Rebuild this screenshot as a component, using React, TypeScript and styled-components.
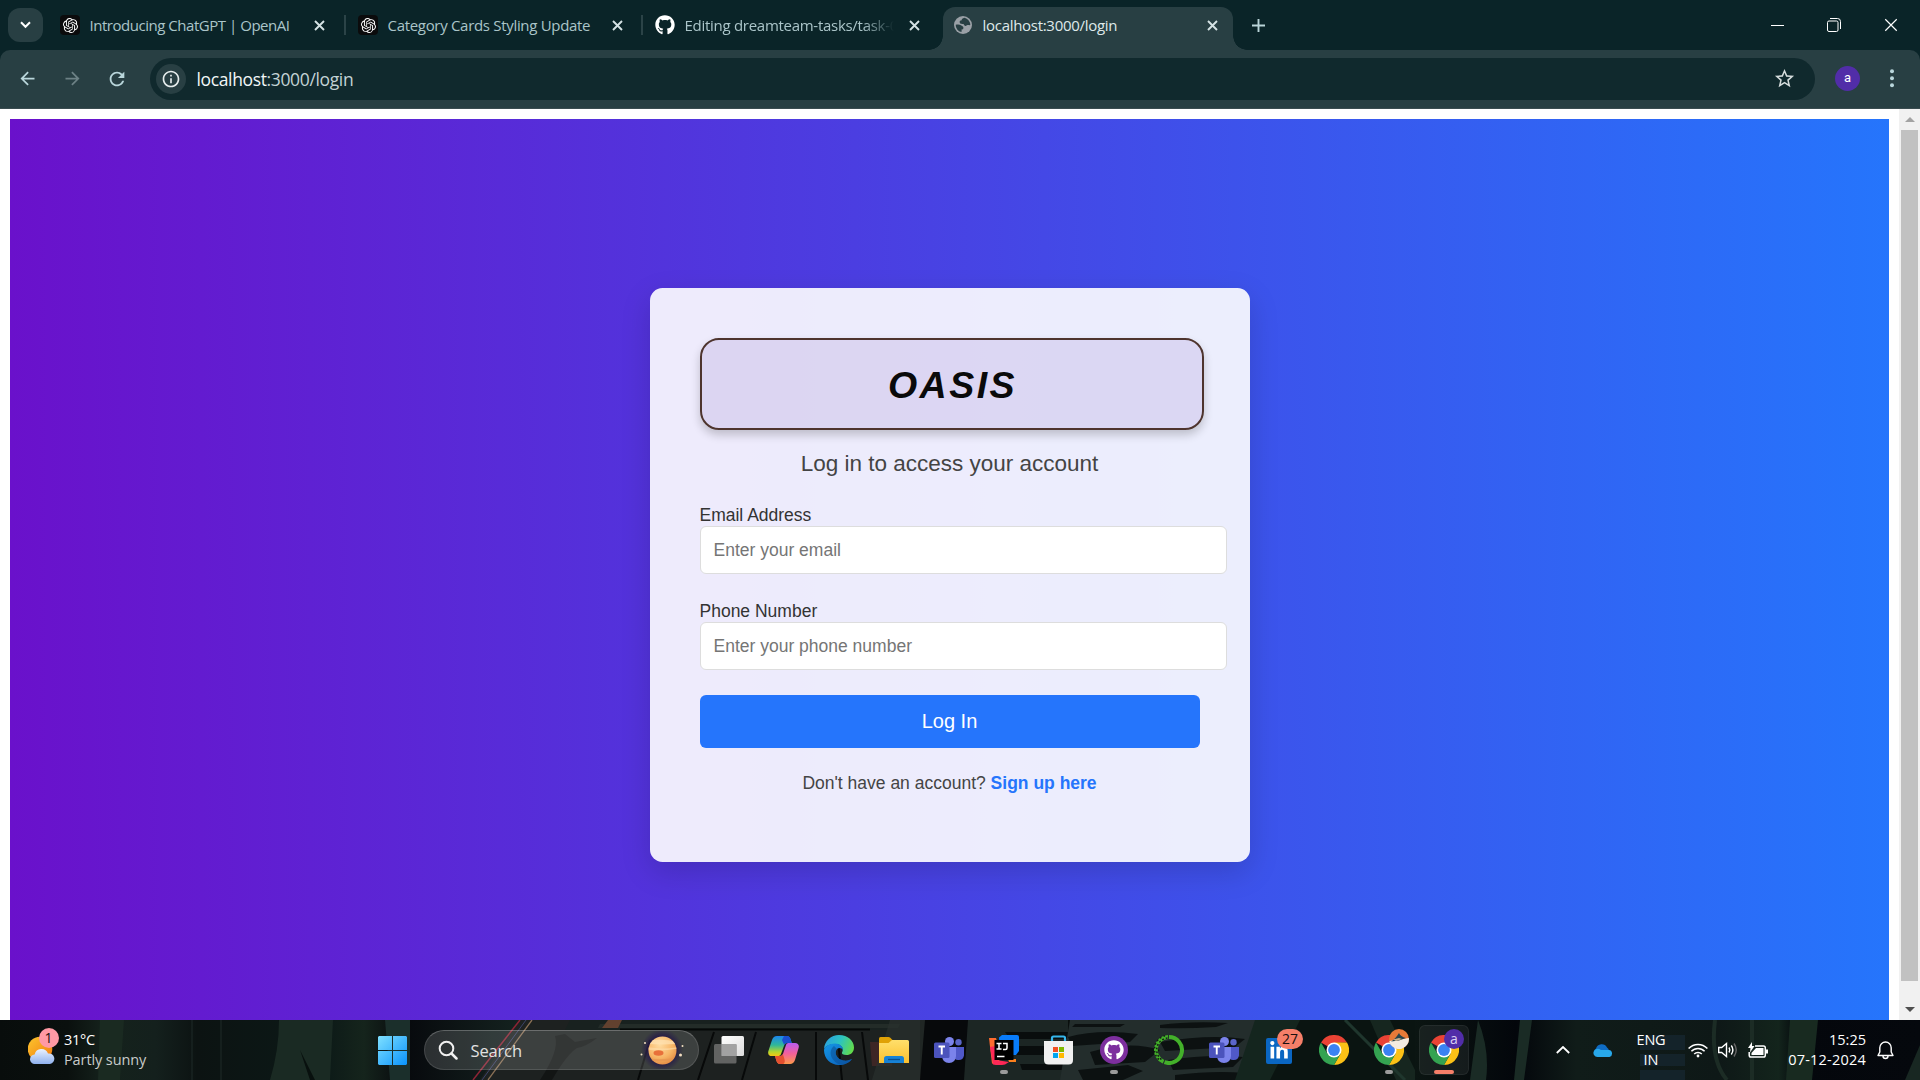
import React from "react";
import styled, { createGlobalStyle } from "styled-components";
import { SiOpenai } from "react-icons/si";
import { FaGithub, FaLinkedinIn } from "react-icons/fa";
import { MdArrowBack, MdArrowForward, MdRefresh, MdInfoOutline, MdStarOutline } from "react-icons/md";

const GlobalStyle = createGlobalStyle`
  html, body { margin: 0; padding: 0; overflow: hidden; background: #fff; }
  * { box-sizing: border-box; }
`;

const ui = `"Open Sans", "Noto Sans", sans-serif`;
const arial = `"Liberation Sans", Arial, sans-serif`;

const Screen = styled.div`
  width: 1920px;
  height: 1080px;
  display: flex;
  flex-direction: column;
  overflow: hidden;
  font-family: ${ui};
`;

const Label = styled.span<{ $spacing?: number }>`
  white-space: nowrap;
  letter-spacing: ${(p) => p.$spacing ?? 0}px;
`;

/* ---------- Browser chrome ---------- */

const TabStrip = styled.header`
  height: 50px;
  flex: none;
  display: flex;
  background: #0a2428;
  color: #b4cdd1;
`;

const TabSearch = styled.button`
  width: 35px;
  height: 34px;
  margin: 8px 7px 0 8px;
  border: 0;
  padding: 0;
  border-radius: 12px;
  background: #283f43;
  color: #fff;
  display: grid;
  place-items: center;
`;

const Tab = styled.div<{ $active?: boolean; $width: number }>`
  position: relative;
  width: ${(p) => p.$width}px;
  height: 43px;
  margin-top: 7px;
  padding: 0 0 0 10px;
  display: flex;
  flex: none;
  align-items: flex-start;
  border-radius: 12px 12px 0 0;
  font-size: 15px;
  line-height: 22px;
  background: ${(p) => (p.$active ? "#283f43" : "transparent")};
  color: ${(p) => (p.$active ? "#dfe9ea" : "#abc5c9")};
  ${(p) =>
    p.$active &&
    `&::before, &::after {
      content: "";
      position: absolute;
      bottom: 0;
      width: 14px;
      height: 14px;
    }
    &::before { left: -14px; background: radial-gradient(circle at 0 0, transparent 13.5px, #283f43 14px); }
    &::after { right: -14px; background: radial-gradient(circle at 100% 0, transparent 13.5px, #283f43 14px); }`}
`;

const Favicon = styled.span<{ $dark?: boolean }>`
  width: 20px;
  height: 20px;
  margin-top: 8px;
  flex: none;
  display: grid;
  place-items: center;
  border-radius: 4px;
  background: ${(p) => (p.$dark ? "#0b0b0c" : "transparent")};
  color: #fff;
`;

const TabTitle = styled.span<{ $fade?: boolean; $spacing: number }>`
  width: 214px;
  flex: none;
  margin: 7px 0 0 9.5px;
  white-space: nowrap;
  letter-spacing: ${(p) => p.$spacing}px;
  ${(p) => p.$fade && `mask-image: linear-gradient(to right, #000 178px, transparent 209px);`}
`;

const TabClose = styled.span`
  width: 20px;
  height: 20px;
  margin: 8px 0 0 6px;
  display: grid;
  place-items: center;
  color: #d5e2e4;
`;

const Divider = styled.i`
  width: 2px;
  height: 20px;
  margin: 15px 2px 0 -4px;
  background: #2b4347;
`;

const NewTab = styled.span`
  width: 50px;
  height: 50px;
  display: grid;
  place-items: center;
  color: #b9d4d8;
`;

const WindowControls = styled.div`
  margin-left: auto;
  display: flex;
  color: #fff;
`;

const ControlCell = styled.span`
  width: 57px;
  height: 50px;
  display: grid;
  place-items: center;
  & + & { padding-right: 1.5px; }
`;

const ToolbarBack = styled.div`
  flex: none;
  height: 59px;
  background: #0a2428;
`;

const Toolbar = styled.div`
  height: 59px;
  display: flex;
  align-items: center;
  padding-bottom: 1px;
  border-bottom: 1px solid #3a4c50;
  border-radius: 10px 10px 0 0;
  background: #283f43;
  color: #b9d2d6;
`;

const NavButton = styled.span<{ $dim?: boolean }>`
  width: 45px;
  height: 42px;
  display: grid;
  place-items: center;
  color: ${(p) => (p.$dim ? "#6c8185" : "#b9d6db")};
`;

const NavGroup = styled.div`
  display: flex;
  flex: none;
  width: 150px;
  padding-left: 4.5px;
`;

const AddressBar = styled.div`
  width: 1665px;
  flex: none;
  height: 42px;
  border-radius: 21px;
  background: #10292d;
  display: flex;
  align-items: center;
  padding: 0 19px 0 6px;
`;

const SiteInfo = styled.span`
  width: 30px;
  height: 30px;
  border-radius: 50%;
  background: #283f43;
  color: #e6eded;
  display: grid;
  place-items: center;
`;

const Url = styled.span`
  margin-left: 10.5px;
  font-size: 17.5px;
  line-height: 26px;
  letter-spacing: -0.36px;
  color: #c3d3d5;
  flex: 1;
  b { font-weight: 400; color: #f2f7f7; }
`;

const Profile = styled.span`
  width: 25px;
  height: 25px;
  flex: none;
  margin: 0 0 1px 20px;
  border-radius: 50%;
  background: #512da8;
  color: #fff;
  font: 13px/24px Roboto, sans-serif;
  text-align: center;
`;

const MenuDots = styled.span`
  width: 60px;
  flex: none;
  padding-left: 4px;
  display: grid;
  place-items: center;
`;

/* ---------- Page ---------- */

const Viewport = styled.div`
  height: 911px;
  flex: none;
  display: flex;
  background: #fff;
  overflow: hidden;
`;

const PageBody = styled.main`
  flex: 1;
  padding: 10px 10px 0 10px;
`;

const Gradient = styled.div`
  height: 912px;
  padding-top: 169px;
  background: linear-gradient(to right, #6a11cb, #2575fc);
  font-family: ${arial};
`;

const Card = styled.section`
  width: 600px;
  height: 574px;
  margin: 0 auto;
  padding: 50px;
  border-radius: 12.5px;
  background: rgba(255, 255, 255, 0.9);
  box-shadow: 0 10px 30px rgba(0, 0, 0, 0.15);
`;

const Brand = styled.h1`
  width: 504px;
  height: 92px;
  margin: 0;
  padding: 0.5px 0 0 2px;
  border: 2px solid #4e342e;
  border-radius: 19px;
  background: rgba(80, 40, 160, 0.11);
  box-shadow: 0 5px 10px rgba(0, 0, 0, 0.2);
  color: #0a0a0a;
  font: italic 700 37.5px/89px ${arial};
  letter-spacing: 2.5px;
  text-align: center;
`;

const Subtitle = styled.p`
  margin: 21px 0 28px;
  font-size: 22.5px;
  line-height: 26px;
  text-align: center;
  color: #444;
`;

const Field = styled.div`
  height: 69px;
  margin-bottom: 27px;
`;

const FieldLabel = styled.label`
  display: block;
  height: 21px;
  font-size: 17.5px;
  line-height: 20px;
  color: #333;
`;

const Input = styled.input`
  display: block;
  width: 527px;
  height: 48px;
  padding: 0 13px;
  border: 1px solid #ddd;
  border-radius: 6px;
  background: #fff;
  font: 17.5px ${arial};
  &::placeholder { color: #757575; opacity: 1; }
`;

const Submit = styled.button`
  display: block;
  width: 500px;
  height: 53px;
  margin: -2px 0 25px;
  padding: 0;
  border: 0;
  border-radius: 6px;
  background: #2575fc;
  color: #fff;
  font: 20px ${arial};
`;

const Footer = styled.p`
  margin: 0;
  font-size: 17.5px;
  line-height: 20px;
  text-align: center;
  color: #444;
  a { color: #2575fc; font-weight: 700; text-decoration: none; }
`;

const Scrollbar = styled.div`
  width: 21px;
  display: flex;
  flex-direction: column;
  align-items: center;
  background: #f1f1f1;
`;

const ScrollArrow = styled.span<{ $down?: boolean }>`
  height: 21px;
  width: 21px;
  display: grid;
  place-items: center;
  margin-top: ${(p) => (p.$down ? "18px" : 0)};
`;

const Thumb = styled.span`
  width: 17px;
  height: 851px;
  background: #c1c1c1;
`;

/* ---------- Taskbar ---------- */

const Taskbar = styled.footer`
  position: relative;
  height: 60px;
  flex: none;
  display: flex;
  background: #0a0f0e;
  color: #fff;
  overflow: hidden;
`;

const Wallpaper = styled.svg`
  position: absolute;
  inset: 0;
  width: 1920px;
  height: 60px;
`;

const Weather = styled.div`
  position: relative;
  width: 378px;
  display: flex;
  padding: 8px 0 0 28px;
`;

const TwoLines = styled.div<{ $align?: string; $width?: number }>`
  display: flex;
  flex-direction: column;
  width: ${(p) => (p.$width ? `${p.$width}px` : "auto")};
  text-align: ${(p) => p.$align ?? "left"};
  font-size: 14.5px;
  line-height: 20px;
`;

const WeatherText = styled(TwoLines)`
  margin: 2px 0 0 5px;
  span + span { color: #c9cccb; }
`;

const Start = styled.span`
  position: relative;
  width: 46px;
  padding-top: 16px;
`;

const Search = styled.div`
  position: relative;
  width: 275px;
  height: 40px;
  margin-top: 10px;
  border-radius: 20px;
  border: 1px solid rgba(255, 255, 255, 0.12);
  border-top-color: rgba(255, 255, 255, 0.24);
  background: rgba(255, 255, 255, 0.14);
  display: flex;
  align-items: center;
  padding: 0 14px 0 13px;
  font-size: 16.5px;
  color: #e2e2e0;
`;

const SearchText = styled.span`
  flex: 1;
  margin-left: 12.5px;
  letter-spacing: -0.15px;
`;

const Apps = styled.div`
  position: relative;
  display: flex;
  padding-left: 2px;
`;

const AppSlot = styled.span<{ $active?: boolean }>`
  position: relative;
  width: 50px;
  height: 50px;
  margin: 5px 2.5px;
  border-radius: 6px;
  display: grid;
  place-items: center;
  background: ${(p) => (p.$active ? "rgba(255,255,255,0.06)" : "transparent")};
  box-shadow: ${(p) => (p.$active ? "inset 0 0 0 1px rgba(255,255,255,0.06)" : "none")};
`;

const Indicator = styled.i<{ $active?: boolean }>`
  position: absolute;
  bottom: 1px;
  left: 50%;
  transform: translateX(-50%);
  height: 4px;
  width: ${(p) => (p.$active ? 20 : 8)}px;
  border-radius: 2px;
  background: ${(p) => (p.$active ? "#f57f69" : "#9b9b9b")};
`;

const Badge = styled.span<{ $w: number; $bg: string; $x: number; $y: number; $fg?: string }>`
  position: absolute;
  left: ${(p) => p.$x}px;
  top: ${(p) => p.$y}px;
  width: ${(p) => p.$w}px;
  height: 20px;
  border-radius: 10px;
  background: ${(p) => p.$bg};
  color: ${(p) => p.$fg ?? "#1a1010"};
  font-size: 14px;
  line-height: 20px;
  text-align: center;
`;

const Tray = styled.div`
  position: relative;
  margin-left: auto;
  display: flex;
  align-items: center;
`;

const TraySlot = styled.span<{ $w: number }>`
  width: ${(p) => p.$w}px;
  height: 60px;
  display: grid;
  place-items: center;
`;

/* ---------- Drawings ---------- */

const Cross = ({ s = 11, w = 1.9 }: { s?: number; w?: number }) => (
  <svg width={s} height={s} viewBox="0 0 11 11">
    <path d="M1 1l9 9M10 1l-9 9" stroke="currentColor" strokeWidth={w} fill="none" />
  </svg>
);

const Globe = () => (
  <svg width="18" height="18" viewBox="0 0 18 18">
    <circle cx="9" cy="9" r="9" fill="#9aa0a6" />
    <path d="M10.5 1.8c-2 .4-3 1.3-2.8 2.5-1.500 0-2.200.7-2 2.100 .3 1.700 2.400 1.400 3.500 1.500 1 .2.8 1.700 2 2 1.300.2 1.400-1 2.600-.8 1.300.2 2 .2 2.500 0A7.300 7.300 0 0 0 10.500 1.800zM1.700 8.700a7.300 7.300 0 0 0 5.700 7.400c.4-1 .3-1.800 0-2.500 1.400 0 2.200-.5 2-2-.1-1.500-1.500-1.600-2.500-2.400-1.300-.9-3.500-.6-5.200-.5z" fill="#283f43" />
  </svg>
);

const PartlySunny = () => (
  <svg width="31" height="36" viewBox="0 0 31 36">
    <defs>
      <linearGradient id="sun" x1="0" y1="0" x2="1" y2="1">
        <stop offset="0" stopColor="#fcc62e" />
        <stop offset="1" stopColor="#f2790f" />
      </linearGradient>
      <linearGradient id="cloud" x1="0" y1="0" x2="0" y2="1">
        <stop offset="0" stopColor="#eaf2ff" />
        <stop offset="1" stopColor="#8fb1ee" />
      </linearGradient>
    </defs>
    <circle cx="12" cy="21" r="12.300" fill="url(#sun)" />
    <path d="M7 36a4.800 4.800 0 0 1-.4-9.600A7 7 0 0 1 20 25.500a5.300 5.300 0 0 1 2 10.500z" fill="url(#cloud)" />
  </svg>
);

const WindowsLogo = () => (
  <svg width="29" height="29" viewBox="0 0 29 29">
    <defs>
      <linearGradient id="win" gradientUnits="userSpaceOnUse" x1="0" y1="0" x2="29" y2="29">
        <stop offset="0" stopColor="#7fe0ff" />
        <stop offset="1" stopColor="#0a93fb" />
      </linearGradient>
    </defs>
    <path d="M1 0h13v14H0V1zM15 0h13l1 1v13H15zM0 15h14v14H1l-1-1zM15 15h14v13l-1 1H15z" fill="url(#win)" />
  </svg>
);

const Planet = () => (
  <svg width="44" height="38" viewBox="0 0 44 38">
    <defs>
      <radialGradient id="halo">
        <stop offset="0.500" stopColor="#20104a" />
        <stop offset="1" stopColor="#20104a" stopOpacity="0" />
      </radialGradient>
      <radialGradient id="planet" cx=".4" cy=".3" r=".75">
        <stop offset="0" stopColor="#ffdba0" />
        <stop offset=".6" stopColor="#f7b566" />
        <stop offset="1" stopColor="#e3873f" />
      </radialGradient>
      <clipPath id="disc"><circle cx="22.500" cy="19.500" r="14" /></clipPath>
    </defs>
    <circle cx="22" cy="19" r="21" fill="url(#halo)" />
    <g clipPath="url(#disc)">
      <rect x="8" y="5" width="29" height="29" fill="url(#planet)" />
      <path d="M6 10q16-3 32 1v2q-16 1-32 0z" fill="#ffe3b3" opacity=".7" />
      <path d="M6 16q16 3 32 0v1.500q-16 3-32 1z" fill="#ffe0ae" opacity=".6" />
      <path d="M6 27q16 3 32-1v2q-16 4-32 1z" fill="#e59450" opacity=".7" />
      <ellipse cx="18.500" cy="22" rx="5" ry="2.800" fill="#e8703a" />
    </g>
    <g fill="#f3dfc0"><circle cx="5" cy="12" r="1" /><circle cx="1.500" cy="23.500" r="1" /><circle cx="42.500" cy="15" r="1" /><circle cx="40.500" cy="24" r="1.500" /></g>
  </svg>
);

const TaskView = () => (
  <svg width="30" height="28" viewBox="0 0 30 28">
    <defs>
      <linearGradient id="tvw" x1="0" y1="0" x2="1" y2="1"><stop offset="0" stopColor="#fff" /><stop offset="1" stopColor="#dcdcdc" /></linearGradient>
    </defs>
    <rect x="7.500" y="0" width="22.500" height="20" rx="1.500" fill="url(#tvw)" />
    <rect x="0" y="8" width="22.500" height="19.500" rx="1.500" fill="#6e6e6e" fillOpacity=".85" />
    <rect x="7.500" y="8" width="15" height="12" fill="#a2a2a2" />
  </svg>
);

const Copilot = () => (
  <svg width="31" height="28" viewBox="0 0 31 28">
    <defs>
      <linearGradient id="cpl" x1="0" y1="0" x2="0" y2="1"><stop offset="0" stopColor="#1c86ee" /><stop offset=".45" stopColor="#2fb79a" /><stop offset=".8" stopColor="#b6d62c" /><stop offset="1" stopColor="#f3c614" /></linearGradient>
      <linearGradient id="cpr" x1="0" y1="0" x2="0" y2="1"><stop offset="0" stopColor="#b95cf0" /><stop offset=".5" stopColor="#f4609a" /><stop offset="1" stopColor="#fc9a4a" /></linearGradient>
    </defs>
    <path d="M9 0h10c2 0 3 1.500 3.500 3l1.200 4h-4c-2 0-3 .8-3.600 2.500L13 18c-.6 1.500-1.500 2-3 2H4c-3 0-4.500-2-3.600-5L4 4C5 1.500 6.500 0 9 0z" fill="url(#cpl)" />
    <path d="M16 0h3c2 0 3 1.500 3.500 3l1.200 4h-4c-2 0-3 .5-3.600 2L14 4z" fill="#1a4fd0" />
    <path d="M22 28H12c-2 0-3-1.500-3.500-3L7 20h4.500c2 0 3-.8 3.600-2.500L18 9c.6-1.500 1.500-2 3-2h6c3 0 4.500 2 3.600 5L27 24c-1 2.500-2.500 4-5 4z" fill="url(#cpr)" />
    <path d="M7 20h4.500c2 0 2.800-.6 3.400-2l1.500 5c.6 2 .6 4-1 5H12c-2 0-3-1.500-3.500-3z" fill="#e5502f" />
  </svg>
);

const Edge = () => (
  <svg width="30" height="30" viewBox="0 0 30 30">
    <defs>
      <linearGradient id="edt" x1="0" y1=".3" x2="1" y2=".6"><stop offset="0" stopColor="#2a9fe0" /><stop offset=".5" stopColor="#2cc3c0" /><stop offset="1" stopColor="#63dc4a" /></linearGradient>
      <linearGradient id="edb" x1="0" y1="0" x2="1" y2="1"><stop offset="0" stopColor="#1597e6" /><stop offset="1" stopColor="#0a5cb8" /></linearGradient>
    </defs>
    <path d="M0 14C.5 6 7 0 15 0c9 0 15 6 15 12.500 0 5-3.500 7.500-7.500 7.500-3.500 0-5-1.300-4.500-2.500 2.500-4-1-8.500-6.500-8.500C6 9 1.500 11 0 14z" fill="url(#edt)" />
    <path d="M0 15C.5 11.500 5 8.500 11 8.500c5 0 8.500 3.500 8 6.500-1-2-4-3-6-1-3 3.500-.5 10.500 6.500 11.500 3.500.5 6.500-.5 8.500-1.500C25 28 20 30 15 30 6.500 30 0 23.500 0 15z" fill="url(#edb)" />
    <path d="M10 11c-4 3-4.500 9-1 13.500 2.500 3.500 6 5.200 9 5.200 4-.5 8-2.500 10-5.700-2 1-5 2-8.500 1.500-7-1-9.500-8-6.500-11.500-1-1-2-2-3-3z" fill="#0b4f96" fillOpacity=".55" />
  </svg>
);

const Explorer = () => (
  <svg width="30" height="26" viewBox="0 0 30 26">
    <defs><linearGradient id="fld" x1="0" y1="0" x2="0" y2="1"><stop offset="0" stopColor="#ffdf6b" /><stop offset="1" stopColor="#fbc02f" /></linearGradient></defs>
    <path d="M0 1.500Q0 0 1.500 0h8q1 0 1.800.8L14 3.500V10H0z" fill="#e0a106" />
    <path d="M0 6h9.500L13 3h15.500Q30 3 30 4.500V26H0z" fill="url(#fld)" />
    <path d="M5 26v-4.500q0-2.500 2.500-2.500h15q2.500 0 2.500 2.500V26z" fill="#1782d6" />
    <path d="M9 22.500h12" stroke="#0b4f8f" strokeWidth="1.300" />
  </svg>
);

const Teams = () => (
  <svg width="30" height="26" viewBox="0 0 30 26">
    <circle cx="24.500" cy="5.200" r="3.200" fill="#5b66c9" />
    <path d="M21 10h9v8.500q-1 5-6 4.500-2 0-3-1z" fill="#5059c9" />
    <circle cx="15.500" cy="4.500" r="4.500" fill="#7b83eb" />
    <path d="M8 10h14v9q-.5 7-7 7t-7-7z" fill="#7b83eb" />
    <rect x="0" y="5.500" width="15.500" height="15.500" rx="1.500" fill="#4b53bc" />
    <path d="M4.500 9.500h6.500M7.750 9.500v8" stroke="#fff" strokeWidth="1.900" />
  </svg>
);

const IntelliJ = () => (
  <svg width="30" height="30" viewBox="0 0 30 30">
    <path d="M10 2.500 13 0h15q2 0 2 2v14l-3 4H11z" fill="#087cfa" />
    <path d="M0 3h7l4 12-1 15-7-1.500z" fill="#fe6b2e" />
    <path d="M1 12l6-1v14l13 2-4 2.500q-6 1-12 0z" fill="#fe2857" />
    <path d="M19 24h8v3H20z" fill="#fc801d" />
    <rect x="5.500" y="5" width="19" height="20" fill="#000" />
    <path d="M7.500 8.500h5M10 8.500v5.500M7.500 14h5M14 8.500h4V13q0 1.500-1.500 1.500H14M8 21.500h7.500" stroke="#fff" strokeWidth="1.500" fill="none" />
  </svg>
);

const Store = () => (
  <svg width="29" height="30" viewBox="0 0 29 30">
    <path d="M8 7V3q0-1.500 1.500-1.500h10Q21 1.500 21 3v4" fill="none" stroke="#35b5ea" strokeWidth="2.200" />
    <path d="M0 6h29v19q0 4.500-4.500 4.500h-20Q0 29.500 0 25z" fill="#f1f1f1" />
    <path d="M9 12h5v5H9z" fill="#f25022" /><path d="M15 12h5v5h-5z" fill="#7fba00" />
    <path d="M9 18h5v5H9z" fill="#00a4ef" /><path d="M15 18h5v5h-5z" fill="#ffb900" />
  </svg>
);

const Anaconda = () => (
  <svg width="30" height="30" viewBox="0 0 30 30">
    <path d="M15 2A13 13 0 1 1 10.500 27.200" fill="none" stroke="#43b02a" strokeWidth="4" />
    <path d="M14 2A13 13 0 0 0 9.500 26.800" fill="none" stroke="#43b02a" strokeWidth="3.800" />
    <path d="M13.500 3A12 12 0 0 0 9 25.500" fill="none" stroke="#131c14" strokeWidth="1.500" strokeDasharray="1.800 2" />
    <path d="M11 .8A14 14 0 0 0 6 25.500" fill="none" stroke="#131c14" strokeWidth="1.500" strokeDasharray="1.600 2.400" />
  </svg>
);

const Chrome = () => (
  <svg width="30" height="30" viewBox="0 0 30 30">
    <path d="M15 15 2 7.500A15 15 0 0 1 28 7.500L15 8z" fill="#ea4335" />
    <path d="M15 7.500h13A15 15 0 0 1 15 30l6.500-11.200z" fill="#fbc116" />
    <path d="M2 7.500A15 15 0 0 0 15 30l6.500-11.200L8.500 18.800z" fill="#34a351" />
    <circle cx="15" cy="15" r="7.500" fill="#fff" />
    <circle cx="15" cy="15" r="5.900" fill="#3a82f3" />
  </svg>
);

const DuckAvatar = () => (
  <svg width="20" height="20" viewBox="0 0 20 20">
    <circle cx="10" cy="10" r="10" fill="#e77a38" />
    <path d="M.3 12 19.900 9A10 10 0 0 1 1 14.500z" fill="#f4ebe0" />
    <path d="M2 12.500q4-2 8-8.500 1.500 3.500 7 5l-7 2.500z" fill="#27454d" />
    <path d="M4 10.500l6-1.500 3 1-6 2z" fill="#c9b08d" />
  </svg>
);

const AvatarSpot = styled.span`
  position: absolute;
  left: 25.5px;
  top: 4px;
  height: 20px;
`;

const LinkedInTile = styled.span`
  width: 26px;
  height: 26px;
  margin-top: 1px;
  border-radius: 2px;
  background: #0a66c2;
  color: #fff;
  display: grid;
  place-items: center;
`;

const GithubDisc = styled.span`
  width: 28px;
  height: 28px;
  border-radius: 50%;
  background: #7d2f9e;
  color: #fff;
  display: grid;
  place-items: center;
`;

const Backdrop = () => (
  <Wallpaper viewBox="0 0 1920 60" preserveAspectRatio="none">
    <defs>
      <linearGradient id="wpl" x1="0" y1="0" x2="1" y2="0">
        <stop offset="0" stopColor="#080d0c" /><stop offset=".13" stopColor="#0a100e" /><stop offset=".2" stopColor="#15221c" /><stop offset=".3" stopColor="#14201d" /><stop offset=".38" stopColor="#0c1312" /><stop offset=".62" stopColor="#0c1917" /><stop offset=".7" stopColor="#15241c" /><stop offset=".78" stopColor="#07090d" /><stop offset="1" stopColor="#14221f" />
      </linearGradient>
      <linearGradient id="wpr" x1="0" y1="0" x2="1" y2="0">
        <stop offset="0" stopColor="#0b1512" /><stop offset=".2" stopColor="#03060b" /><stop offset=".32" stopColor="#101c19" /><stop offset=".6" stopColor="#0e1817" /><stop offset=".72" stopColor="#13241c" /><stop offset=".76" stopColor="#04070c" /><stop offset="1" stopColor="#05080d" />
      </linearGradient>
    </defs>
    <rect width="520" height="60" fill="url(#wpl)" />
    <path d="M100 0h24l-4 60H98z" fill="#1a2a21" />
    <path d="M192 0v60M221 0v60" stroke="#1f2b28" />
    <path d="M279 0h54l-3 60h-60q9-30 9-60z" fill="#1a2a23" />
    <path d="M300 30l15 30h-5z" fill="#08100e" />
    <path d="M385 0h25v60h-20z" fill="#1b2f2b" />
    <path d="M520 0h400v60H480z" fill="#1d2120" />
    <path d="M570 0h350v10H565z" fill="#18211f" />
    <path d="M600 4h300l-2 4H598z" fill="#2b332f" opacity=".6" />
    <path d="M540 60q20-30 15-44l10-2 10 8 22-4q-10 8-20 10-10 6-25 32z" fill="#0b0e0d" opacity=".6" />
    <path d="M520 0 473 60" stroke="#8c2435" strokeWidth="1.500" />
    <path d="M532 0 488 60" stroke="#8a7055" strokeWidth="1.300" />
    <path d="M526 0 482 60" stroke="#3d4469" />
    <path d="M608 0h14l-4 8h-16z" fill="#62412f" />
    <path d="M650 20l-12 40M714 12l-16 48M756 12l-14 48M816 12v48M838 20l4 40M862 12l6 48" stroke="#070909" strokeWidth="2" fill="none" />
    <path d="M620 9.500h250" stroke="#050807" strokeWidth="2" />
    <path d="M870 22h22v24h-20z" fill="#4c2a28" opacity=".7" />
    <path d="M890 0h40l-8 60h-50z" fill="#2a302e" opacity=".7" />
    <path d="M925 0h45l-4 60h-46z" fill="#07090b" />
    <path d="M968 0h100v60H964z" fill="#1c2624" />
    <path d="M1005 12h80v7h-75zM1010 26h70l-5 9h-70zM1020 44h60v6h-58z" fill="#090d0d" />
    <path d="M1070 0h225l-20 60h-215z" fill="#232d2c" />
    <path d="M1075 4h50l-5 3h-48zM1068 17q30-8 70-3l-8 8-58 4zM1090 32q40-12 70-2l-15 12-50 3zM1078 50l50-5 15 6-20 9h-40zM1160 5q30-4 68-2l-12 4q-30 2-56 1zM1160 22q50-8 85-3l-10 8-70 4zM1168 40q40-6 75-3l-10 10-60 3zM1175 55q40-5 70-2v7h-70z" fill="#0c1111" />
    <path d="M1255 0h60l-30 60h-50z" fill="#14251e" />
    <path d="M1300 0h120v60h-150z" fill="#0a1411" />
    <path d="M1370 0h20l30 60h-24z" fill="#16261f" />
    <path d="M1345 0l60 60" stroke="#1f362d" strokeWidth="3" />
    <rect x="1415" width="505" height="60" fill="url(#wpr)" />
    <path d="M1478 0q12 30 8 60h-16zM1520 0h12l-8 60h-10z" fill="#1a2b25" />
    <path d="M1640 15h45v15h-45zM1640 34h45v12h-45zM1640 50h45v10h-45z" fill="#14232a" />
    <path d="M1715 0q-5 40 12 60M1752 0v60" stroke="#1c2c25" strokeWidth="4" fill="none" />
    <path d="M1790 0h28l-6 60h-26z" fill="#182a20" />
    <path d="M1920 25v35h-15z" fill="#182722" />
  </Wallpaper>
);

const tabs = [
  { icon: "openai", title: "Introducing ChatGPT | OpenAI", spacing: -0.47, width: 298 },
  { icon: "openai", title: "Category Cards Styling Update", spacing: -0.31, width: 297 },
  { icon: "github", title: "Editing dreamteam-tasks/task-0", spacing: -0.28, width: 298 },
];

const Login = () => (
  <Viewport>
    <PageBody>
      <Gradient>
        <Card>
          <Brand>OASIS</Brand>
          <Subtitle>Log in to access your account</Subtitle>
          <Field>
            <FieldLabel htmlFor="email">Email Address</FieldLabel>
            <Input id="email" placeholder="Enter your email" />
          </Field>
          <Field>
            <FieldLabel htmlFor="phone">Phone Number</FieldLabel>
            <Input id="phone" placeholder="Enter your phone number" />
          </Field>
          <Submit>Log In</Submit>
          <Footer>
            Don't have an account? <a>Sign up here</a>
          </Footer>
        </Card>
      </Gradient>
    </PageBody>
    <Scrollbar>
      <ScrollArrow><svg width="10" height="5"><path d="M0 5 5 0l5 5z" fill="#a3a3a3" /></svg></ScrollArrow>
      <Thumb />
      <ScrollArrow $down><svg width="10" height="5"><path d="M0 0l5 5 5-5z" fill="#505050" /></svg></ScrollArrow>
    </Scrollbar>
  </Viewport>
);

export default function App() {
  return (
    <Screen>
      <GlobalStyle />
      <TabStrip>
        <TabSearch>
          <svg width="11" height="8" viewBox="0 0 11 8"><path d="M1 1.200 5.500 5.800 10 1.200" fill="none" stroke="currentColor" strokeWidth="2" /></svg>
        </TabSearch>
        {tabs.map((t, i) => (
          <React.Fragment key={t.title}>
            <Tab $width={t.width}>
              <Favicon $dark={t.icon === "openai"}>
                {t.icon === "openai" ? <SiOpenai size={15} /> : <FaGithub size={20} />}
              </Favicon>
              <TabTitle $spacing={t.spacing} $fade={i === 2}>{t.title}</TabTitle>
              <TabClose><Cross /></TabClose>
            </Tab>
            {i < 2 && <Divider />}
          </React.Fragment>
        ))}
        <Tab $active $width={290}>
          <Favicon><Globe /></Favicon>
          <TabTitle $spacing={-0.29}>localhost:3000/login</TabTitle>
          <TabClose><Cross /></TabClose>
        </Tab>
        <NewTab>
          <svg width="13" height="13" viewBox="0 0 13 13"><path d="M6.500 0v13M0 6.500h13" stroke="currentColor" strokeWidth="1.900" /></svg>
        </NewTab>
        <WindowControls>
          <ControlCell><svg width="13" height="13"><path d="M0 6.500h13" stroke="#fff" /></svg></ControlCell>
          <ControlCell>
            <svg width="14" height="14" viewBox="0 0 14 14" fill="none" stroke="#fff">
              <rect x=".5" y="3" width="10.500" height="10.500" rx="1.500" />
              <path d="M3 .5h7.500q3 0 3 3V11" />
            </svg>
          </ControlCell>
          <ControlCell><Cross s={14} w={0.9} /></ControlCell>
        </WindowControls>
      </TabStrip>
      <ToolbarBack>
        <Toolbar>
          <NavGroup>
            <NavButton><MdArrowBack size={21} /></NavButton>
            <NavButton $dim><MdArrowForward size={21} /></NavButton>
            <NavButton><MdRefresh size={22} /></NavButton>
          </NavGroup>
          <AddressBar>
            <SiteInfo><MdInfoOutline size={20} /></SiteInfo>
            <Url><b>localhost</b>:3000/login</Url>
            <MdStarOutline size={23} color="#d5dcdc" />
          </AddressBar>
          <Profile>a</Profile>
          <MenuDots>
            <svg width="4" height="19" viewBox="0 0 4 19" fill="#b9d6db"><circle cx="2" cy="2.200" r="2" /><circle cx="2" cy="9.200" r="2" /><circle cx="2" cy="16.200" r="2" /></svg>
          </MenuDots>
        </Toolbar>
      </ToolbarBack>
      <Login />
      <Taskbar>
        <Backdrop />
        <Weather>
          <PartlySunny />
          <Badge $w={20} $x={38.5} $y={8} $bg="#ff99a4">1</Badge>
          <WeatherText>
            <Label $spacing={-0.3}>31°C</Label>
            <Label $spacing={-0.1}>Partly sunny</Label>
          </WeatherText>
        </Weather>
        <Start><WindowsLogo /></Start>
        <Search>
          <svg width="20" height="20" viewBox="0 0 20 20" fill="none" stroke="#f0f0f0"><circle cx="8.500" cy="8.500" r="6.800" strokeWidth="2" /><path d="M13.500 13.500l5 5" strokeWidth="2.500" strokeLinecap="round" /></svg>
          <SearchText>Search</SearchText>
          <Planet />
        </Search>
        <Apps>
          <AppSlot><TaskView /></AppSlot>
          <AppSlot><Copilot /></AppSlot>
          <AppSlot><Edge /></AppSlot>
          <AppSlot><Explorer /></AppSlot>
          <AppSlot><Teams /></AppSlot>
          <AppSlot><IntelliJ /><Indicator /></AppSlot>
          <AppSlot><Store /></AppSlot>
          <AppSlot><GithubDisc><FaGithub size={20} /></GithubDisc><Indicator /></AppSlot>
          <AppSlot><Anaconda /></AppSlot>
          <AppSlot><Teams /></AppSlot>
          <AppSlot><LinkedInTile><FaLinkedinIn size={20} /></LinkedInTile><Badge $w={26} $x={23.5} $y={4} $bg="#f57f69">27</Badge></AppSlot>
          <AppSlot><Chrome /></AppSlot>
          <AppSlot><Chrome /><AvatarSpot><DuckAvatar /></AvatarSpot><Indicator /></AppSlot>
          <AppSlot $active><Chrome /><Badge $w={20} $x={25.5} $y={4} $bg="#512da8" $fg="#d9cff2">a</Badge><Indicator $active /></AppSlot>
        </Apps>
        <Tray>
          <TraySlot $w={50}><svg width="14" height="8" viewBox="0 0 14 8"><path d="M.8 7 7 1l6.200 6" fill="none" stroke="#fff" strokeWidth="1.800" /></svg></TraySlot>
          <TraySlot $w={30}>
            <svg width="20" height="13" viewBox="0 0 20 13">
              <path d="M4 12a4 4 0 0 1-1-7.500A6 6 0 0 1 14 3.500q2 1 2 4z" fill="#0f6cc4" />
              <path d="M4.500 13A4 4 0 0 1 1 7q3-4 7-1l8 0a3.600 3.600 0 0 1 .5 7z" fill="#28a8ea" />
            </svg>
          </TraySlot>
          <TraySlot $w={66}><TwoLines $align="center"><Label $spacing={-0.2}>ENG</Label><Label>IN</Label></TwoLines></TraySlot>
          <TraySlot $w={28}>
            <svg width="20" height="15" viewBox="0 0 20 15" fill="none" stroke="#fff" strokeWidth="1.500"><path d="M.6 5.500a13 13 0 0 1 18.800 0M3.400 8.300a9 9 0 0 1 13.200 0M6.200 11a5.300 5.300 0 0 1 7.600 0" /><circle cx="10" cy="13" r="1.400" fill="#fff" stroke="none" /></svg>
          </TraySlot>
          <TraySlot $w={32}>
            <svg width="20" height="16" viewBox="0 0 20 16" fill="none" stroke="#fff" strokeWidth="1.400"><path d="M.7 5.500h3L8.500 1.500v13L3.700 10.500h-3z" /><path d="M11 5.500q1.600 2.500 0 5M13.300 3.500q3.200 4.500 0 9" /><path d="M16 1.500q4.500 6.500 0 13" stroke="#666" /></svg>
          </TraySlot>
          <TraySlot $w={28}>
            <svg width="20" height="17" viewBox="0 0 20 17"><path d="M7 4h8.500q1.800 0 1.800 1.800v7.400q0 1.800-1.800 1.800H3q-1.800 0-1.800-1.800V10" fill="none" stroke="#fff" strokeWidth="1.500" /><path d="M8 6h7.500v7H3.500v-2z" fill="#fff" /><path d="M18 7.500h2v4h-2z" fill="#fff" /><path d="M4 0L0 6h2.500L2 10.500 6.500 4H4z" fill="#fff" /></svg>
          </TraySlot>
          <TwoLines $align="right" $width={94}><Label $spacing={0}>15:25</Label><Label $spacing={0.22}>07-12-2024</Label></TwoLines>
          <TraySlot $w={38}>
            <svg width="17" height="19" viewBox="0 0 17 19" fill="none" stroke="#fff" strokeWidth="1.400"><path d="M1 14.500 2.800 11V6.700a5.700 5.700 0 0 1 11.400 0V11L16 14.500z" strokeLinejoin="round" /><path d="M6 15q0 2.500 2.500 2.500T11 15" /></svg>
          </TraySlot>
          <TraySlot $w={16} />
        </Tray>
      </Taskbar>
    </Screen>
  );
}
